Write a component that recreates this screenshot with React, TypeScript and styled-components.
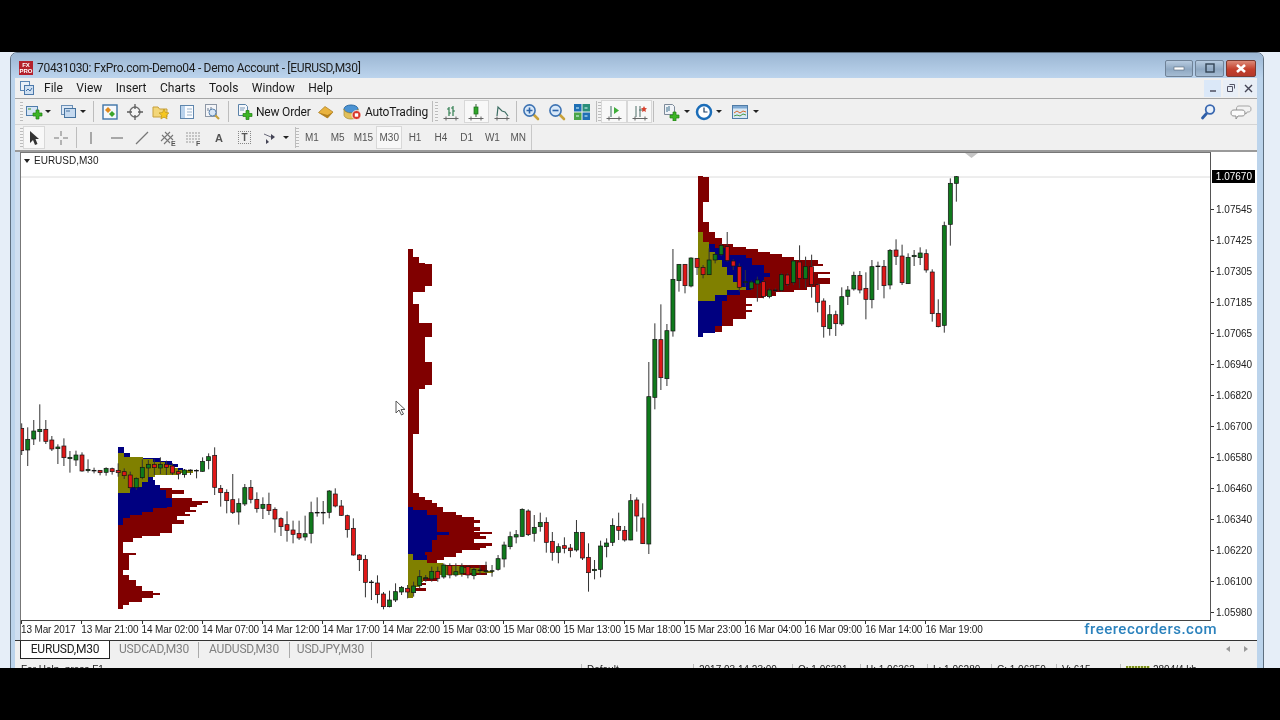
import { ReactNode } from 'react';
import styled, { createGlobalStyle } from 'styled-components';

const Global = createGlobalStyle`
    html, body {
        margin: 0;
        padding: 0;
        background: #000;
    }
    body {
        font-family: Roboto, "Liberation Sans", sans-serif;
    }
`

const Screen = styled.div`
    width: 1280px;
    height: 720px;
    background: #000;
    padding-top: 52px;
    box-sizing: border-box;
    overflow: hidden;
    filter: blur(0.4px);
`

const Desktop = styled.div`
    height: 616px;
    background: #e6eef8;
    padding-left: 10px;
    overflow: hidden;
`

const Window = styled.div`
    width: 1254px;
    height: 640px;
    box-sizing: border-box;
    border: 1px solid #5e6f80;
    border-radius: 7px 7px 0 0;
    background: #bcd4ec;
    display: flex;
    flex-direction: column;
`

const TitleBar = styled.div`
    height: 25px;
    flex: none;
    display: flex;
    align-items: center;
    padding: 5px 7px 0 8px;
    box-sizing: border-box;
    border-radius: 6px 6px 0 0;
    background: linear-gradient(#9bb6d3, #bcd4ed);
`

const Logo = styled.div`
    width: 14px;
    height: 14px;
    background: #b3202c;
    color: #fff;
    font: bold 6px/6px "Liberation Sans", sans-serif;
    text-align: center;
    padding-top: 1px;
    box-sizing: border-box;
    margin-right: 4px;
    overflow: hidden;
`

const TitleText = styled.div`
    font-size: 12px;
    letter-spacing: -0.3px;
    color: #1c1c1c;
    white-space: nowrap;
    flex: 1;
`

const WinButton = styled.button<{ $w: number; $close?: boolean }>`
    width: ${p => p.$w}px;
    height: 17px;
    margin-left: 2px;
    padding: 0;
    border: 1px solid ${p => (p.$close ? '#7a3a30' : '#6f8297')};
    border-radius: 2px;
    background: ${p => (p.$close ? 'linear-gradient(#dc8a78, #c4402c 55%, #b5382a)' : 'linear-gradient(#b7cbe0, #8fa8c2 55%, #a5bcd3)')};
    display: flex;
    align-items: center;
    justify-content: center;
`

const Client = styled.div`
    flex: 1;
    margin: 0 6px 0 4px;
    background: #f0f0f0;
    display: flex;
    flex-direction: column;
    min-height: 0;
`

const MenuBar = styled.div`
    height: 20px;
    flex: none;
    display: flex;
    align-items: center;
    border-bottom: 1px solid #a5a5a5;
    box-sizing: content-box;
    padding-left: 4px;
`

const MenuDoc = styled.div`
    width: 16px;
    height: 16px;
    margin-right: 9px;
`

const MenuItem = styled.span`
    font-size: 12px;
    color: #1a1a1a;
    margin-right: 13.5px;
`

const MdiButtons = styled.div`
    margin-left: auto;
    display: flex;
    gap: 2px;
`

const MdiButton = styled.div<{ $w: number; $on?: boolean }>`
    width: ${p => p.$w}px;
    height: 17px;
    background: ${p => (p.$on ? '#dbe8f8' : '#e8eef6')};
    display: flex;
    align-items: center;
    justify-content: center;
`

const Toolbar = styled.div`
    height: 25px;
    flex: none;
    display: flex;
    align-items: center;
    padding-left: 5px;
    border-bottom: 1px solid #d4d4d4;
`

const LastToolbar = styled(Toolbar)`
    border-bottom: 2px solid #9a9a9a;
`

const Grip = styled.div`
    width: 3px;
    height: 19px;
    flex: none;
    background: repeating-linear-gradient(#bcbcbc 0 1px, #f4f4f4 1px 3px);
`

const Gap = styled.div<{ $w: number }>`
    width: ${p => p.$w}px;
    flex: none;
`

const Sep = styled.div`
    width: 1px;
    height: 21px;
    flex: none;
    background: #bdbdbd;
`

const ToolBtn = styled.div<{ $w: number; $on?: boolean }>`
    width: ${p => p.$w}px;
    height: 23px;
    flex: none;
    display: flex;
    align-items: center;
    justify-content: center;
    box-sizing: border-box;
    border: 1px solid ${p => (p.$on ? '#d8d8d8' : 'transparent')};
    background: ${p => (p.$on ? '#f8f8f8' : 'transparent')};
`

const LabelBtn = styled(ToolBtn)`
    justify-content: flex-start;
    padding-left: 3px;
    gap: 3px;
    font-size: 12px;
    letter-spacing: -0.2px;
    color: #1a1a1a;
    white-space: nowrap;
`

const Caret = styled.div`
    width: 6px;
    flex: none;
    height: 0;
    box-sizing: border-box;
    border-left: 3px solid transparent;
    border-right: 3px solid transparent;
    border-top: 3px solid #222;
`

const Period = styled(ToolBtn)`
    font: 10px "Liberation Sans", sans-serif;
    color: #555;
`

const PeriodEnd = styled.div`
    width: 1px;
    height: 25px;
    flex: none;
    background: #c8c8c8;
`

const DrawLetter = styled.span<{ $boxed?: boolean }>`
    font: bold 11px "Liberation Sans", sans-serif;
    color: #555;
    ${p => p.$boxed && 'border: 1px dotted #888; padding: 0 2px; font-size: 10px;'}
`

const RightTools = styled.div`
    margin-left: auto;
    margin-right: 5px;
    display: flex;
    gap: 12px;
`

const ChartShell = styled.div`
    height: 488px;
    flex: none;
    display: flex;
    background: #fff;
    border-bottom: 1px solid #333;
`

const FrameEdge = styled.div`
    width: 5px;
    flex: none;
    background: #cfdff1;
    border-right: 1px solid #777;
`

const ChartBody = styled.div`
    position: relative;
    flex: 1;
    display: grid;
    grid-template-columns: 1190px 1fr;
    grid-template-rows: 469px 1fr;
`

const Plot = styled.div`
    position: relative;
    border-top: 1px solid #777;
    border-right: 1px solid #555;
    border-bottom: 1px solid #444;
    box-sizing: border-box;
    overflow: hidden;
`

const ChartSvg = styled.svg`
    display: block;
`

const SymbolTag = styled.div`
    position: absolute;
    left: 3px;
    top: 2px;
    display: flex;
    align-items: center;
    gap: 4px;
    font: 10px "Liberation Sans", sans-serif;
    color: #222;
`

const SymbolCaret = styled.div`
    width: 0;
    height: 0;
    border-left: 3px solid transparent;
    border-right: 3px solid transparent;
    border-top: 4px solid #222;
`

const Pointer = styled.svg`
    position: absolute;
    left: 374px;
    top: 247px;
`

const PriceAxis = styled.div`
    display: flex;
    flex-direction: column;
    height: 469px;
    box-sizing: border-box;
    padding-top: 18px;
    font: 10px "Liberation Sans", sans-serif;
    color: #222;
`

const PriceTag = styled.div`
    height: 13px;
    width: 43px;
    flex: none;
    margin-left: 1px;
    margin-bottom: 11px;
    background: #000;
    color: #fff;
    line-height: 13px;
    text-align: right;
    padding-right: 3px;
    box-sizing: border-box;
`

const PriceRow = styled.div`
    height: 31px;
    flex: none;
    display: flex;
    align-items: center;
    gap: 2px;
`

const PriceTick = styled.div`
    width: 3px;
    height: 1px;
    background: #333;
`

const TimeAxis = styled.div`
    grid-column: 1 / 3;
    display: flex;
    font: 10px "Liberation Sans", sans-serif;
    letter-spacing: -0.15px;
    color: #222;
`

const TimeCell = styled.div`
    width: 60.3px;
    flex: none;
    white-space: nowrap;
    display: flex;
    flex-direction: column;
`

const TimeTick = styled.div`
    width: 1px;
    height: 3px;
    background: #333;
`

const Watermark = styled.div`
    position: absolute;
    right: 40px;
    bottom: 2px;
    font: 500 15px Roboto, "Liberation Sans", sans-serif;
    letter-spacing: 0.5px;
    color: #2b82bd;
`

const TabRow = styled.div`
    height: 21px;
    flex: none;
    display: flex;
    align-items: flex-start;
    padding-left: 5px;
    font-size: 12px;
    letter-spacing: -0.2px;
`

const ActiveTab = styled.div`
    width: 90px;
    height: 18px;
    box-sizing: border-box;
    background: #fff;
    border: 1px solid #222;
    border-top: none;
    text-align: center;
    line-height: 17px;
    color: #222;
`

const Tab = styled.div<{ $w: number }>`
    width: ${p => p.$w}px;
    height: 16px;
    margin-top: 1px;
    box-sizing: border-box;
    border-right: 1px solid #aaa;
    text-align: center;
    line-height: 15px;
    color: #808080;
`

const TabArrows = styled.div`
    margin-left: auto;
    margin-right: 9px;
    margin-top: 5px;
    display: flex;
    gap: 14px;
`

const TabArrow = styled.div<{ $right?: boolean }>`
    width: 0;
    height: 0;
    border-top: 3px solid transparent;
    border-bottom: 3px solid transparent;
    ${p => (p.$right ? 'border-left: 4px solid #999;' : 'border-right: 4px solid #999;')}
`

const StatusBar = styled.div`
    flex: 1;
    display: flex;
    font: 10px "Liberation Sans", sans-serif;
    color: #222;
    padding-top: 2px;
`

const StatusCell = styled.div<{ $w: number; $plain?: boolean }>`
    width: ${p => p.$w}px;
    height: 18px;
    padding-left: 5px;
    box-sizing: border-box;
    border-left: 1px solid ${p => (p.$plain ? 'transparent' : '#bbb')};
    white-space: nowrap;
    flex: none;
    display: flex;
    gap: 3px;
`

const TrafficBars = styled.div`
    width: 24px;
    height: 10px;
    margin-top: 2px;
    background: repeating-linear-gradient(90deg, #7c8f1c 0 2px, #d8dfa0 2px 3px);
`

type Row = [number, number, number, number, number]
type Band = [number, number, number]

const OLIVE = '#808000'
const NAVY = '#000080'
const MAROON = '#800000'
const UP = '#0f7a1c'
const DOWN = '#e01818'

// candle rows are y values read from the 3x crops: high, body top, body bottom, low, 1 = up
const firstBars: Row[] = [
    [70, 85, 152, 165, 0], [82, 118, 150, 198, 1], [60, 93, 117, 135, 1], [13, 88, 95, 125, 1],
    [60, 88, 124, 132, 0], [108, 120, 147, 153, 0], [133, 141, 146, 192, 1], [115, 138, 173, 198, 0],
    [153, 172, 176, 218, 1], [152, 165, 180, 198, 1], [157, 165, 213, 215, 0], [178, 208, 212, 218, 1],
    [203, 211, 213, 220, 1], [210, 211, 218, 226, 0], [202, 205, 217, 227, 1], [203, 206, 215, 224, 0],
    [190, 211, 218, 230, 0], [205, 215, 227, 237, 0], [215, 225, 263, 268, 0], [232, 235, 263, 270, 1],
    [178, 202, 233, 238, 1], [180, 193, 204, 232, 1], [178, 193, 203, 225, 0], [172, 193, 204, 222, 1],
    [182, 193, 202, 225, 0], [190, 198, 219, 225, 0], [210, 215, 222, 238, 0], [207, 210, 224, 233, 1],
    [208, 210, 212, 225, 1], [208, 211, 213, 235, 1], [172, 184, 214, 215, 1], [160, 170, 182, 208, 1],
    [142, 166, 262, 285, 0], [255, 265, 278, 320, 0], [268, 277, 302, 340, 0], [222, 299, 337, 342, 0],
    [295, 310, 336, 374, 1], [252, 263, 312, 318, 1], [240, 262, 298, 310, 0], [277, 298, 326, 338, 0],
    [292, 313, 325, 357, 1], [278, 313, 332, 345, 0], [322, 328, 357, 398, 0], [352, 356, 380, 408, 0],
    [334, 374, 391, 425, 0], [362, 390, 403, 430, 0], [362, 400, 414, 420, 0], [347, 401, 411, 422, 1],
    [305, 338, 400, 430, 1], [292, 337, 339, 350, 1], [303, 337, 339, 373, 1], [270, 273, 337, 355, 1],
    [265, 282, 318, 322, 0], [300, 318, 346, 348, 0], [344, 347, 389, 413, 0], [355, 385, 465, 467, 0],
    [462, 465, 479, 513, 0], [465, 478, 547, 592, 0], [540, 546, 548, 600, 1], [526, 549, 584, 610, 0],
    [576, 582, 620, 628, 0], [572, 600, 620, 622, 1], [550, 575, 600, 606, 1], [558, 562, 576, 585, 1],
    [555, 565, 576, 595, 0], [545, 558, 578, 590, 1], [510, 530, 557, 565, 1], [525, 533, 536, 545, 1],
    [500, 514, 537, 545, 1], [500, 514, 535, 545, 0], [490, 495, 531, 536, 1], [490, 497, 525, 535, 0],
    [490, 515, 525, 530, 1], [490, 500, 520, 530, 1], [495, 500, 525, 535, 0], [500, 508, 527, 538, 1],
    [495, 510, 512, 525, 1], [485, 512, 515, 525, 1], [495, 512, 514, 530, 1], [465, 476, 508, 512, 1],
    [425, 435, 477, 502, 1], [395, 410, 440, 448, 1], [390, 404, 411, 430, 1], [325, 328, 409, 410, 1],
    [328, 333, 404, 408, 0], [345, 382, 400, 425, 1], [338, 367, 380, 395, 1], [352, 367, 427, 458, 0],
    [396, 424, 457, 482, 0], [430, 440, 457, 490, 1], [412, 437, 445, 460, 0], [432, 444, 452, 472, 0],
    [360, 397, 450, 455, 1], [397, 397, 474, 480, 0], [430, 472, 518, 575, 0], [480, 508, 512, 538, 1],
    [422, 438, 508, 532, 1], [415, 429, 440, 472, 1], [355, 376, 427, 438, 1], [338, 379, 391, 420, 0],
    [378, 391, 420, 425, 0], [282, 302, 420, 421, 1], [292, 300, 348, 395, 0], [310, 354, 431, 432, 0],
]

const lastBars: Row[] = [
    [576, 680, 1122, 1152, 1], [460, 508, 682, 718, 1], [403, 509, 623, 660, 0], [462, 482, 626, 648, 1],
    [237, 328, 483, 500, 1], [282, 283, 332, 365, 1], [282, 283, 347, 370, 0], [262, 264, 348, 352, 1],
    [264, 265, 292, 315, 0], [285, 292, 314, 325, 0], [235, 270, 314, 315, 1], [250, 253, 270, 280, 1],
    [220, 226, 254, 258, 1], [186, 230, 272, 275, 0], [268, 273, 288, 300, 0], [280, 290, 352, 365, 0],
    [300, 335, 338, 350, 1], [332, 336, 356, 360, 1], [320, 330, 342, 395, 1], [330, 335, 380, 385, 0],
    [355, 360, 380, 385, 1], [355, 360, 362, 368, 0], [310, 314, 361, 365, 1], [310, 315, 343, 348, 0],
    [270, 273, 338, 345, 1], [226, 276, 325, 355, 0], [260, 290, 326, 355, 1], [254, 290, 344, 383, 0],
    [340, 344, 397, 427, 0], [385, 393, 470, 503, 0], [405, 434, 476, 497, 1], [422, 434, 461, 498, 0],
    [352, 380, 462, 468, 1], [348, 360, 379, 405, 1], [305, 316, 357, 362, 1], [303, 316, 360, 370, 0],
    [307, 355, 388, 448, 0], [270, 290, 389, 415, 1], [275, 288, 290, 360, 1], [270, 289, 347, 385, 0],
    [237, 241, 345, 358, 1], [208, 240, 259, 285, 0], [224, 258, 338, 345, 0], [250, 262, 341, 342, 1],
    [240, 256, 260, 288, 1], [232, 249, 263, 285, 1], [238, 251, 300, 308, 0], [298, 306, 431, 455, 0],
    [388, 430, 470, 472, 0], [155, 167, 466, 488, 1], [25, 40, 163, 227, 1], [18, 20, 40, 95, 1],
]

const bars = [
    ...firstBars.map(r => r.slice(0, 4).map(v => 400 + v / 3).concat(r[4])),
    ...lastBars.map(r => r.slice(0, 4).map(v => 170 + v / 3).concat(r[4])),
]

// profile bands: y from, y to, right edge, same 3x crop units
const profileOne = {
    origin: [110, 440],
    red: [[143, 150, 185], [150, 161, 222], [161, 175, 185], [175, 250, 185], [175, 183, 245], [182, 188, 295], [188, 195, 275], [195, 202, 260], [202, 210, 240], [210, 216, 258], [216, 222, 225], [222, 228, 240], [228, 240, 200], [240, 252, 222], [252, 278, 185], [278, 288, 150], [288, 295, 95], [295, 305, 70], [305, 340, 40], [340, 345, 78], [345, 390, 58], [390, 405, 40], [405, 420, 58], [420, 438, 78], [438, 453, 95], [453, 458, 130], [458, 465, 150], [465, 475, 130], [475, 485, 95], [485, 495, 58], [495, 507, 40]],
    blue: [[20, 40, 42], [40, 50, 60], [55, 65, 150], [62, 72, 185], [72, 82, 205], [85, 95, 220], [105, 120, 130], [120, 135, 135], [135, 150, 150], [150, 175, 168], [175, 200, 185], [200, 205, 170], [205, 215, 130], [215, 225, 95], [225, 235, 60], [235, 255, 40]],
    olive: [[40, 50, 42], [50, 58, 100], [58, 65, 130], [65, 75, 165], [75, 85, 185], [85, 90, 205], [90, 98, 250], [98, 105, 205], [105, 112, 135], [112, 125, 115], [125, 140, 95], [140, 160, 60]],
}

const profileTwoTop = {
    origin: [390, 240],
    red: [[27, 50, 70], [50, 70, 88], [70, 72, 106], [72, 138, 125], [138, 155, 106], [155, 192, 70], [192, 250, 88], [250, 290, 125], [290, 367, 106], [367, 435, 125], [435, 447, 106], [447, 582, 88], [582, 760, 70]],
    blue: [] as Band[],
    olive: [] as Band[],
}

const profileTwo = {
    origin: [330, 400],
    red: [[280, 290, 268], [290, 300, 286], [300, 310, 305], [310, 320, 322], [320, 335, 340], [335, 345, 378], [345, 450, 396], [345, 352, 396], [352, 360, 432], [360, 395, 432], [360, 370, 450], [380, 392, 450], [395, 403, 486], [403, 408, 450], [408, 418, 468], [418, 428, 432], [428, 438, 486], [438, 445, 468], [440, 450, 450], [450, 460, 396], [460, 470, 378], [470, 480, 342], [480, 495, 322], [495, 525, 470], [525, 543, 322], [550, 555, 288], [565, 572, 288]],
    blue: [[320, 330, 250], [330, 345, 290], [345, 395, 322], [395, 405, 358], [405, 420, 322], [420, 455, 305], [455, 465, 285], [465, 490, 290]],
    olive: [[463, 480, 250], [480, 490, 290], [490, 497, 340], [497, 505, 400], [505, 512, 450], [512, 518, 488], [518, 525, 400], [525, 535, 320], [535, 545, 280], [545, 560, 270], [560, 593, 250]],
}

const profileThree = {
    origin: [690, 170],
    red: [[17, 22, 40], [22, 95, 58], [95, 155, 40], [155, 185, 58], [185, 205, 76], [205, 222, 95], [222, 232, 130], [232, 238, 168], [238, 245, 205], [245, 252, 240], [252, 260, 275], [260, 270, 312], [270, 345, 365], [270, 283, 385], [283, 287, 398], [305, 312, 420], [312, 325, 385], [325, 342, 420], [342, 352, 385], [352, 360, 350], [360, 367, 312], [367, 378, 258], [378, 385, 222], [385, 402, 168], [402, 408, 185], [408, 420, 168], [420, 426, 185], [426, 448, 168], [448, 467, 130], [467, 487, 95]],
    blue: [[222, 235, 76], [235, 255, 112], [255, 265, 168], [265, 285, 185], [285, 310, 222], [310, 320, 240], [320, 340, 222], [340, 360, 185], [360, 375, 150], [375, 392, 112], [392, 467, 95], [467, 490, 76], [490, 500, 40]],
    olive: [[187, 215, 40], [215, 245, 58], [245, 270, 76], [270, 290, 95], [290, 315, 112], [315, 335, 130], [335, 350, 150], [350, 360, 168], [360, 375, 112], [375, 392, 76]],
}

const layers: [typeof profileOne, number][] = [
    [profileOne, 118],
    [profileTwoTop, 408],
    [profileTwo, 408],
    [profileThree, 698],
]

const prices = ['1.07545', '1.07425', '1.07305', '1.07185', '1.07065', '1.06940', '1.06820', '1.06700', '1.06580', '1.06460', '1.06340', '1.06220', '1.06100', '1.05980']
const times = ['13 Mar 2017', '13 Mar 21:00', '14 Mar 02:00', '14 Mar 07:00', '14 Mar 12:00', '14 Mar 17:00', '14 Mar 22:00', '15 Mar 03:00', '15 Mar 08:00', '15 Mar 13:00', '15 Mar 18:00', '15 Mar 23:00', '16 Mar 04:00', '16 Mar 09:00', '16 Mar 14:00', '16 Mar 19:00']
const menus = ['File', 'View', 'Insert', 'Charts', 'Tools', 'Window', 'Help']
const periods = ['M1', 'M5', 'M15', 'M30', 'H1', 'H4', 'D1', 'W1', 'MN']
const statusCells: [number, string][] = [[112, 'Default'], [99, '2017.03.14 23:00'], [68, 'O: 1.06301'], [67, 'H: 1.06363'], [64, 'L: 1.06280'], [65, 'C: 1.06350'], [64, 'V: 615']]

function Icon({ children, w = 18 }: { children: ReactNode; w?: number }) {
    return <svg width={w} height={18} viewBox={`0 0 ${w} 18`}>{children}</svg>
}

const Plus = ({ x = 0, y = 0 }: { x?: number; y?: number }) => (
    <path transform={`translate(${x} ${y})`} d="M11 7h3v3h3v3h-3v3h-3v-3H8v-3h3z" fill="#3cb526" stroke="#1f7d14" strokeWidth="0.7" />
)

const Base = () => <path d="M1.5 15.5h15M4 13.5v4M14 13.5v4" stroke="#666" fill="none" />

const Lens = ({ sign }: { sign: string }) => (
    <>
        <path d="M11.5 11.5l4.5 4.5" stroke="#c9a23a" strokeWidth="2.6" strokeLinecap="round" />
        <circle cx="7.5" cy="7.5" r="5.6" fill="#d8e8f8" stroke="#3f74b3" strokeWidth="1.6" />
        <path d={sign} stroke="#2c63a8" strokeWidth="1.6" />
    </>
)

function Chart() {
    return (
        <ChartSvg width={1189} height={467} viewBox="21 153 1189 467">
            <path d="M21 177h1189" stroke="#dcdcdc" />
            <path d="M965 153h13l-6.500 5z" fill="#c4c4c4" />
            {layers.map(([p, left], n) => (
                <g key={n} shapeRendering="crispEdges">
                    {[[p.red, MAROON], [p.blue, NAVY], [p.olive, OLIVE]].map(([rows, color], k) =>
                        (rows as Band[]).map(([a, b, right], i) => (
                            <rect
                                key={`${k}-${i}`}
                                x={left}
                                y={p.origin[1] + a / 3}
                                width={p.origin[0] + right / 3 - left}
                                height={(b - a) / 3}
                                fill={color as string}
                            />
                        )),
                    )}
                </g>
            ))}
            {bars.map(([high, top, bottom, low, up], i) => {
                const x = 21.7 + i * 6.03
                return (
                    <g key={i}>
                        <path d={`M${x} ${high}V${low}`} stroke="#333" strokeWidth="1" />
                        <rect x={x - 2} y={top} width={4} height={Math.max(bottom - top, 0.6)} fill={up ? UP : DOWN} stroke="#141414" strokeWidth="0.7" />
                    </g>
                )
            })}
        </ChartSvg>
    )
}

export default function App() {
    return (
        <Screen>
            <Global />
            <Desktop>
                <Window>
                    <TitleBar>
                        <Logo>FX<br />PRO</Logo>
                        <TitleText>70431030: FxPro.com-Demo04 - Demo Account - [EURUSD,M30]</TitleText>
                        <WinButton $w={28}>
                            <svg width="12" height="6"><rect x="1" y="2" width="10" height="3" fill="#fff" stroke="#567" strokeWidth="0.6" /></svg>
                        </WinButton>
                        <WinButton $w={29}>
                            <svg width="12" height="10"><rect x="2" y="1" width="8" height="8" fill="none" stroke="#345" strokeWidth="1.4" /></svg>
                        </WinButton>
                        <WinButton $w={30} $close>
                            <svg width="12" height="11"><path d="M2 2l8 7M10 2l-8 7" stroke="#fff" strokeWidth="2.6" /></svg>
                        </WinButton>
                    </TitleBar>
                    <Client>
                        <MenuBar>
                            <MenuDoc>
                                <svg width="16" height="16">
                                    <rect x="1.500" y="1.500" width="9" height="9" fill="#e9f0f8" stroke="#5a86b5" />
                                    <rect x="5.500" y="5.500" width="9" height="9" fill="#cfe0f2" stroke="#4d79aa" />
                                    <path d="M7 11l2-2 2 2 2-3" stroke="#3c6ea5" fill="none" />
                                </svg>
                            </MenuDoc>
                            {menus.map(m => <MenuItem key={m}>{m}</MenuItem>)}
                            <MdiButtons>
                                <MdiButton $w={17} $on>
                                    <svg width="8" height="8"><path d="M1 7h6" stroke="#445" strokeWidth="1.400" /></svg>
                                </MdiButton>
                                <MdiButton $w={15}>
                                    <svg width="10" height="10"><path d="M3.500 1.500h5v4M1.500 3.500h5v5h-5z" stroke="#556" fill="none" /></svg>
                                </MdiButton>
                                <MdiButton $w={17}>
                                    <svg width="9" height="9"><path d="M1 1l7 7M8 1l-7 7" stroke="#445" strokeWidth="1.400" /></svg>
                                </MdiButton>
                            </MdiButtons>
                        </MenuBar>

                        <Toolbar>
                            <Grip />
                            <ToolBtn $w={22}>
                                <Icon>
                                    <rect x="1.500" y="3.500" width="11" height="9" fill="#d5e4f5" stroke="#4f7cab" />
                                    <path d="M3 6h3" stroke="#3c9a2a" />
                                    <Plus />
                                </Icon>
                            </ToolBtn>
                            <Caret />
                            <Gap $w={7} />
                            <ToolBtn $w={22}>
                                <Icon>
                                    <rect x="1.500" y="2.500" width="11" height="9" fill="#dbe7f5" stroke="#6b8fb5" />
                                    <rect x="4.500" y="5.500" width="11" height="9" fill="#c5d9ef" stroke="#46739f" />
                                    <path d="M6 8h4" stroke="#46739f" />
                                </Icon>
                            </ToolBtn>
                            <Caret />
                            <Gap $w={7} />
                            <Sep />
                            <Gap $w={3} />
                            <ToolBtn $w={25.6}>
                                <Icon>
                                    <rect x="2" y="2" width="14" height="14" fill="#f6f8fb" stroke="#3f74a8" strokeWidth="1.400" />
                                    <path d="M7 4l3 3-3 3-3-3z" fill="#e08a1c" />
                                    <path d="M11 8l3 3-3 3-3-3z" fill="#3ba52a" />
                                </Icon>
                            </ToolBtn>
                            <ToolBtn $w={25.6}>
                                <Icon>
                                    <circle cx="9" cy="9" r="5" fill="#f4f4f4" stroke="#6e6e6e" strokeWidth="1.300" />
                                    <path d="M9 1v5M9 12v5M1 9h5M12 9h5" stroke="#5c5c5c" strokeWidth="1.300" />
                                </Icon>
                            </ToolBtn>
                            <ToolBtn $w={25.6}>
                                <Icon>
                                    <path d="M1 4h5l1.500 2H15v8H1z" fill="#f3d678" stroke="#c79f3a" />
                                    <path d="M12 6l1.500 3.500 3.500.4-2.700 2.400.8 3.700-3.100-1.900-3.100 1.900.8-3.700L7 9.900l3.500-.4z" fill="#f7c71f" stroke="#b68e12" strokeWidth="0.6" />
                                </Icon>
                            </ToolBtn>
                            <ToolBtn $w={25.6}>
                                <Icon>
                                    <rect x="2.500" y="2.500" width="13" height="13" fill="#fafcff" stroke="#5f86ad" />
                                    <rect x="3" y="3" width="4" height="12" fill="#b9d2ec" />
                                    <path d="M9 6h5M9 9h5M9 12h5" stroke="#9cb3ca" />
                                </Icon>
                            </ToolBtn>
                            <ToolBtn $w={25.6}>
                                <Icon>
                                    <rect x="2.500" y="1.500" width="11" height="12" fill="#f4f5f8" stroke="#8d97a5" />
                                    <path d="M5 8V5M8 8V4" stroke="#6a7c92" />
                                    <path d="M12 12l4 4" stroke="#c9a23a" strokeWidth="2.200" />
                                    <circle cx="9.500" cy="9.500" r="3.500" fill="#d8e6f5" stroke="#5a82ad" />
                                </Icon>
                            </ToolBtn>
                            <Gap $w={3} />
                            <Sep />
                            <Gap $w={2} />
                            <LabelBtn $w={82}>
                                <Icon>
                                    <path d="M3.500 1.500h7l2 2v9h-9z" fill="#f4f7fb" stroke="#5b82a8" />
                                    <path d="M5 5h5M5 7h4" stroke="#7a99b8" />
                                    <Plus y={0.5} />
                                </Icon>
                                New Order
                            </LabelBtn>
                            <ToolBtn $w={26}>
                                <Icon>
                                    <path d="M1.500 9.500L8 3.500l8 5.500-5.500 6z" fill="#e9b33f" stroke="#a87a1c" strokeWidth="0.7" />
                                    <path d="M1.500 9.500l9 5.500L16 9l-5.500 3z" fill="#b4801e" />
                                </Icon>
                            </ToolBtn>
                            <LabelBtn $w={90}>
                                <Icon w={19}>
                                    <ellipse cx="8" cy="6" rx="7" ry="4" fill="#4b93d3" stroke="#2c6ba5" />
                                    <path d="M1 6v6c0 2 3 4 7 4s7-2 7-4V6c0 2-3 4-7 4S1 8 1 6z" fill="#e2c05a" stroke="#a58b3a" strokeWidth="0.7" />
                                    <circle cx="13.500" cy="12" r="4.500" fill="#d9362a" stroke="#fff" strokeWidth="0.8" />
                                    <rect x="11.800" y="10.300" width="3.400" height="3.400" fill="#fff" />
                                </Icon>
                                AutoTrading
                            </LabelBtn>
                            <Gap $w={3} />
                            <Sep />
                            <Gap $w={2} />
                            <Grip />
                            <ToolBtn $w={25.6}>
                                <Icon>
                                    <Base />
                                    <path d="M7 4v9M5 6h2M7 10h2M11 3v10M9 5h2M11 8h2" stroke="#2f7d4f" fill="none" strokeWidth="1.200" />
                                </Icon>
                            </ToolBtn>
                            <ToolBtn $w={25.6} $on>
                                <Icon>
                                    <Base />
                                    <path d="M9 1v13" stroke="#3a5f3a" />
                                    <rect x="7" y="4" width="4" height="7" fill="#2fa52a" stroke="#1c6c1c" strokeWidth="0.7" />
                                </Icon>
                            </ToolBtn>
                            <ToolBtn $w={25.6}>
                                <Icon>
                                    <Base />
                                    <path d="M4 13l1-9 4 4 3 1 3 4" stroke="#3c6d63" fill="none" strokeWidth="1.200" />
                                </Icon>
                            </ToolBtn>
                            <Gap $w={1} />
                            <Sep />
                            <Gap $w={1.6} />
                            <ToolBtn $w={25.6}>
                                <Icon><Lens sign="M4.500 7.500h6M7.500 4.500v6" /></Icon>
                            </ToolBtn>
                            <ToolBtn $w={25.6}>
                                <Icon><Lens sign="M4.500 7.500h6" /></Icon>
                            </ToolBtn>
                            <ToolBtn $w={25.6}>
                                <Icon>
                                    <rect x="1" y="1" width="7.500" height="7.500" fill="#1f6fb5" />
                                    <rect x="9.500" y="1" width="7.500" height="7.500" fill="#2a8f7a" />
                                    <rect x="1" y="9.500" width="7.500" height="7.500" fill="#4aa548" />
                                    <rect x="9.500" y="9.500" width="7.500" height="7.500" fill="#1f6fb5" />
                                    <path d="M3 5h3M11.500 5h3M3 13h3M11.500 13h3" stroke="#dff" />
                                </Icon>
                            </ToolBtn>
                            <Gap $w={1} />
                            <Sep />
                            <Gap $w={1} />
                            <Grip />
                            <ToolBtn $w={25.6} $on>
                                <Icon>
                                    <Base />
                                    <path d="M6 3v11" stroke="#3c6d63" />
                                    <path d="M9 4l5 3.500L9 11z" fill="#3fae3a" />
                                </Icon>
                            </ToolBtn>
                            <ToolBtn $w={25.6} $on>
                                <Icon>
                                    <Base />
                                    <path d="M5 3v11M9 3v11M8 7h4" stroke="#4f6f68" />
                                    <path d="M13 3l1 2 2 .3-1.500 1.500.4 2.200-1.900-1-1.900 1 .4-2.200L10 5.300l2-.3z" fill="#d8422e" />
                                </Icon>
                            </ToolBtn>
                            <Gap $w={1} />
                            <Sep />
                            <Gap $w={4} />
                            <ToolBtn $w={26}>
                                <Icon w={20}>
                                    <path d="M3.500 1.500h8l2 2v8h-10z" fill="#f0f3f7" stroke="#7d8a99" />
                                    <path d="M6 4v5M8 3v5" stroke="#3a6e8c" />
                                    <Plus x={1} y={2} />
                                </Icon>
                            </ToolBtn>
                            <Caret />
                            <Gap $w={2} />
                            <ToolBtn $w={24}>
                                <Icon>
                                    <circle cx="9" cy="9" r="7" fill="#fff" stroke="#1b6db8" strokeWidth="2.500" />
                                    <path d="M9 4.500V9h3.500" stroke="#1f3f63" fill="none" strokeWidth="1.200" />
                                </Icon>
                            </ToolBtn>
                            <Caret />
                            <Gap $w={5} />
                            <ToolBtn $w={26}>
                                <Icon>
                                    <rect x="1.500" y="2.500" width="15" height="13" fill="#d9e8f5" stroke="#4f7ba6" />
                                    <rect x="2" y="3" width="14" height="2.500" fill="#7ea9d3" />
                                    <path d="M3 10l3-2 3 2 3-2 3 1" stroke="#d8682a" fill="none" />
                                    <path d="M3 13l3-1 3 1 3-2 3 1" stroke="#4a9a4a" fill="none" />
                                </Icon>
                            </ToolBtn>
                            <Caret />
                            <RightTools>
                                <Icon>
                                    <path d="M6.500 10.500L2.500 15" stroke="#2f5fa8" strokeWidth="2.800" strokeLinecap="round" />
                                    <circle cx="10" cy="6.500" r="4.300" fill="#e9f1fb" stroke="#3a68b0" strokeWidth="1.800" />
                                </Icon>
                                <Icon w={22}>
                                    <path d="M9 3h9c2 0 3 1 3 3s-1 3-3 3h-1l-1 2-2-2H9C7 9 6.500 8 6.500 6S7 3 9 3z" fill="#f2f2f2" stroke="#a5a5a5" />
                                    <path d="M4 7h8c2 0 3 1 3 3s-1 3-3 3H8l-2 3v-3H4c-2 0-3-1-3-3s1-3 3-3z" fill="#fbfbfb" stroke="#8f8f8f" />
                                </Icon>
                            </RightTools>
                        </Toolbar>

                        <LastToolbar>
                            <Grip />
                            <ToolBtn $w={22} $on>
                                <Icon>
                                    <path d="M5 2v12l3-3 2 5 2.500-1-2-5H14z" fill="#333" />
                                </Icon>
                            </ToolBtn>
                            <Gap $w={3} />
                            <ToolBtn $w={26}>
                                <Icon><path d="M9 2v5M9 11v5M2 9h5M11 9h5" stroke="#777" /></Icon>
                            </ToolBtn>
                            <Gap $w={2} />
                            <Sep />
                            <Gap $w={1.2} />
                            <ToolBtn $w={25.6}>
                                <Icon><path d="M9 3v12" stroke="#777" strokeWidth="1.200" /></Icon>
                            </ToolBtn>
                            <ToolBtn $w={25.6}>
                                <Icon><path d="M3 9h12" stroke="#777" strokeWidth="1.200" /></Icon>
                            </ToolBtn>
                            <ToolBtn $w={25.6}>
                                <Icon><path d="M3 15L15 3" stroke="#777" strokeWidth="1.200" /></Icon>
                            </ToolBtn>
                            <ToolBtn $w={25.6}>
                                <Icon>
                                    <path d="M2 12L11 3M5 15l9-9M3 6l8 8M6 3l8 8" stroke="#777" strokeWidth="1.100" />
                                    <text x="12" y="17" fontSize="7" fontFamily="Liberation Sans" fontWeight="bold" fill="#555">E</text>
                                </Icon>
                            </ToolBtn>
                            <ToolBtn $w={25.6}>
                                <Icon>
                                    <path d="M2 4h14M2 7h14M2 10h14M2 13h9" stroke="#999" strokeDasharray="2 1" />
                                    <text x="12" y="17" fontSize="7" fontFamily="Liberation Sans" fontWeight="bold" fill="#555">F</text>
                                </Icon>
                            </ToolBtn>
                            <ToolBtn $w={25.6}><DrawLetter>A</DrawLetter></ToolBtn>
                            <ToolBtn $w={25.6}><DrawLetter $boxed>T</DrawLetter></ToolBtn>
                            <ToolBtn $w={25.6}>
                                <Icon w={17}>
                                    <path d="M2 5l7 3" stroke="#667" />
                                    <path d="M9 5l4 3-4 3z" fill="#445" />
                                    <path d="M4 10l3 3-3 2z" fill="#445" />
                                </Icon>
                            </ToolBtn>
                            <Caret />
                            <Gap $w={6} />
                            <Sep />
                            <Grip />
                            {periods.map(p => (
                                <Period key={p} $w={25.8} $on={p === 'M30'}>{p}</Period>
                            ))}
                            <PeriodEnd />
                        </LastToolbar>

                        <ChartShell>
                            <FrameEdge />
                            <ChartBody>
                                <Plot>
                                    <Chart />
                                    <SymbolTag><SymbolCaret />EURUSD,M30</SymbolTag>
                                    <Pointer width="12" height="16" viewBox="0 0 12 16">
                                        <path d="M1 1v12l3-3 2.500 5 2-1-2.500-4.500H10z" fill="#fff" stroke="#555" />
                                    </Pointer>
                                </Plot>
                                <PriceAxis>
                                    <PriceTag>1.07670</PriceTag>
                                    {prices.map(p => (
                                        <PriceRow key={p}><PriceTick />{p}</PriceRow>
                                    ))}
                                </PriceAxis>
                                <TimeAxis>
                                    {times.map(t => (
                                        <TimeCell key={t}><TimeTick />{t}</TimeCell>
                                    ))}
                                </TimeAxis>
                                <Watermark>freerecorders.com</Watermark>
                            </ChartBody>
                        </ChartShell>

                        <TabRow>
                            <ActiveTab>EURUSD,M30</ActiveTab>
                            <Tab $w={89}>USDCAD,M30</Tab>
                            <Tab $w={91}>AUDUSD,M30</Tab>
                            <Tab $w={82}>USDJPY,M30</Tab>
                            <TabArrows>
                                <TabArrow />
                                <TabArrow $right />
                            </TabArrows>
                        </TabRow>
                        <StatusBar>
                            <StatusCell $w={566} $plain>For Help, press F1</StatusCell>
                            {statusCells.map(([w, t]) => (
                                <StatusCell key={t} $w={w}>{t}</StatusCell>
                            ))}
                            <StatusCell $w={100}><TrafficBars />2804/4 kb</StatusCell>
                        </StatusBar>
                    </Client>
                </Window>
            </Desktop>
        </Screen>
    )
}
